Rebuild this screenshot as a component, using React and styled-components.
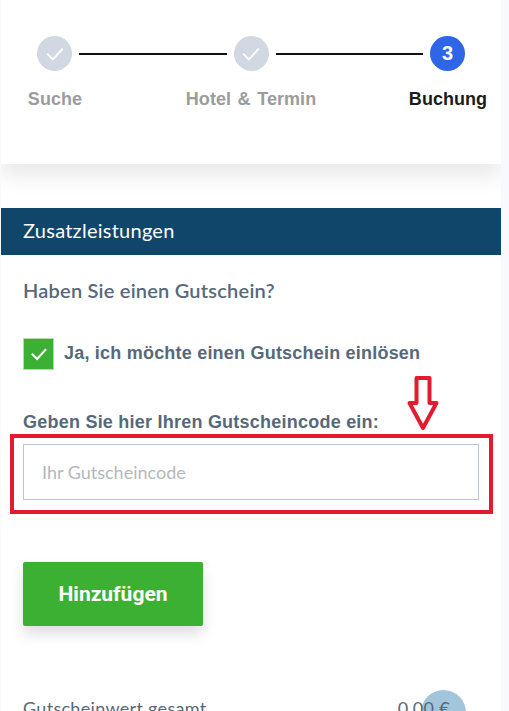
import styled, { createGlobalStyle } from "styled-components";

const GlobalStyle = createGlobalStyle`
  html, body {
    margin: 0;
    height: 711px;
    overflow: hidden;
    background: #f8f9fd;
  }
`;

const Page = styled.div`
  position: relative;
  width: 500px;
  height: 711px;
  margin-left: 1px;
  background: #fff;
  overflow: hidden;
  font-family: "Liberation Sans", Arial, sans-serif;
`;

const StepperCard = styled.header`
  height: 164px;
  padding: 36px 14px 0 27px;
  box-sizing: border-box;
  background: #fff;
  box-shadow: 0 12px 20px rgba(0, 0, 0, 0.09);
`;

const StepRow = styled.div`
  display: flex;
  align-items: center;
  padding: 0 22px 0 9px;
`;

const Circle = styled.div`
  flex: none;
  width: 35px;
  height: 35px;
  border-radius: 50%;
  display: flex;
  align-items: center;
  justify-content: center;
  background: ${(props) => (props.active ? "#2f66e8" : "#d2d8e1")};
  color: #fff;
  font-size: 20px;
  font-weight: 700;
`;

const Line = styled.div`
  flex: 1;
  height: 2px;
  margin: 0 7px;
  background: #111;
`;

const LabelRow = styled.div`
  display: grid;
  grid-template-columns: 196px 196px 198px;
  justify-items: center;
  margin: 18px 0 0 -71px;
`;

const StepLabel = styled.span`
  font-size: 18px;
  line-height: 21px;
  font-weight: 700;
  letter-spacing: 0.05px;
  word-spacing: 1.5px;
  white-space: nowrap;
  color: ${(props) => (props.active ? "#1b1b1b" : "#9c9c9c")};
`;

const Banner = styled.h2`
  height: 47px;
  margin: 44px 0 0;
  padding-left: 22px;
  background: #0f4669;
  color: #fff;
  font: 400 20px/45px Lato, sans-serif;
  letter-spacing: 0.25px;
`;

const Section = styled.section`
  padding: 0 22px;
`;

const Title = styled.h3`
  margin: 23px 0 0;
  color: #56697a;
  font: 600 20px/24px Lato, sans-serif;
  letter-spacing: 0.22px;
`;

const CheckRow = styled.label`
  display: flex;
  align-items: center;
  gap: 10px;
  margin-top: 36px;
`;

const CheckBox = styled.span`
  width: 31px;
  height: 32px;
  display: flex;
  align-items: center;
  justify-content: center;
  background: #3bb033;
  border: 1px solid #b9d8b6;
  box-sizing: border-box;
`;

const CheckText = styled.span`
  padding-bottom: 2px;
  color: #56697a;
  font-size: 18px;
  font-weight: 700;
  letter-spacing: 0.21px;
`;

const FieldLabel = styled.div`
  margin-top: 42px;
  color: #56697a;
  font-size: 18px;
  line-height: 20px;
  font-weight: 700;
  letter-spacing: 0.23px;
`;

const CodeInput = styled.input`
  display: block;
  width: 456px;
  height: 56px;
  margin-top: 12px;
  padding: 0 18px;
  box-sizing: border-box;
  border: 1px solid #b9c8d2;
  background: #fff;
  font: 400 18px Lato, sans-serif;
  &::placeholder {
    color: #b4b8bc;
    opacity: 1;
  }
`;

const AddButton = styled.button`
  display: block;
  width: 180px;
  height: 64px;
  margin-top: 62px;
  border: 0;
  border-radius: 2px;
  background: #3bb033;
  color: #fff;
  font: 700 21px Roboto, sans-serif;
  box-shadow: 0 8px 14px rgba(0, 0, 0, 0.13);
`;

const SummaryRow = styled.div`
  position: relative;
  z-index: 1;
  display: flex;
  justify-content: space-between;
  margin-top: 71px;
  padding-right: 29px;
  color: #56697a;
  font: 400 18px/22px Lato, sans-serif;
  letter-spacing: 0.3px;
`;

const Highlight = styled.div`
  position: absolute;
  left: 9px;
  top: 434px;
  width: 483px;
  height: 80px;
  box-sizing: border-box;
  border: 4px solid #e31b2c;
  pointer-events: none;
`;

const ArrowMark = styled.svg`
  position: absolute;
  left: 405px;
  top: 375px;
`;

const ScrollDot = styled.div`
  position: absolute;
  left: 420px;
  top: 690px;
  width: 45px;
  height: 45px;
  border-radius: 50%;
  background: #a3c5dc;
`;

const Tick = ({ size, width = 2.2 }) => (
  <svg width={size} height={size} viewBox="0 0 24 24" fill="none">
    <path
      d="M3.5 12.5 L9.5 18.5 L20.5 6.5"
      stroke="#fff"
      strokeWidth={width}
      strokeLinecap="square"
    />
  </svg>
);

export default function App() {
  return (
    <>
      <GlobalStyle />
      <Page>
        <StepperCard>
          <StepRow>
            <Circle>
              <Tick size={20} />
            </Circle>
            <Line />
            <Circle>
              <Tick size={20} />
            </Circle>
            <Line />
            <Circle active>3</Circle>
          </StepRow>
          <LabelRow>
            <StepLabel>Suche</StepLabel>
            <StepLabel>Hotel &amp; Termin</StepLabel>
            <StepLabel active>Buchung</StepLabel>
          </LabelRow>
        </StepperCard>
        <Banner>Zusatzleistungen</Banner>
        <Section>
          <Title>Haben Sie einen Gutschein?</Title>
          <CheckRow>
            <CheckBox>
              <Tick size={18} width={2.8} />
            </CheckBox>
            <CheckText>Ja, ich möchte einen Gutschein einlösen</CheckText>
          </CheckRow>
          <FieldLabel>Geben Sie hier Ihren Gutscheincode ein:</FieldLabel>
          <CodeInput placeholder="Ihr Gutscheincode" />
          <AddButton>Hinzufügen</AddButton>
          <SummaryRow>
            <span>Gutscheinwert gesamt</span>
            <span>0,00 €</span>
          </SummaryRow>
        </Section>
        <Highlight />
        <ArrowMark width="34" height="58" viewBox="0 0 34 58" fill="none">
          <path
            d="M10.5 3 H23.5 V28 H30.5 L17 53 L3.5 28 H10.5 Z"
            stroke="#e31b2c"
            strokeWidth="4"
            strokeLinejoin="round"
          />
        </ArrowMark>
        <ScrollDot />
      </Page>
    </>
  );
}
